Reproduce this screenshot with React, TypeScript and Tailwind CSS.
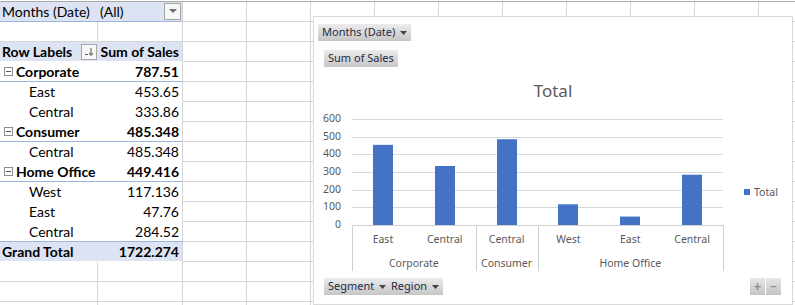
import React from 'react';

const pivotFont = { fontFamily: 'Lato, "Liberation Sans", sans-serif' };
const chartFont = '"Noto Sans", "Open Sans", sans-serif';

type PivotRow = {
  label?: string;
  value?: string;
  kind: 'filter' | 'empty' | 'header' | 'group' | 'item' | 'total';
  blueLine?: boolean;
};

const rows: PivotRow[] = [
  { kind: 'filter', label: 'Months (Date)', value: '(All)', blueLine: true },
  { kind: 'empty' },
  { kind: 'header', label: 'Row Labels', value: 'Sum of Sales' },
  { kind: 'group', label: 'Corporate', value: '787.51', blueLine: true },
  { kind: 'item', label: 'East', value: '453.65' },
  { kind: 'item', label: 'Central', value: '333.86' },
  { kind: 'group', label: 'Consumer', value: '485.348', blueLine: true },
  { kind: 'item', label: 'Central', value: '485.348' },
  { kind: 'group', label: 'Home Office', value: '449.416', blueLine: true },
  { kind: 'item', label: 'West', value: '117.136' },
  { kind: 'item', label: 'East', value: '47.76' },
  { kind: 'item', label: 'Central', value: '284.52', blueLine: true },
  { kind: 'total', label: 'Grand Total', value: '1722.274' },
  { kind: 'empty' },
  { kind: 'empty' },
  { kind: 'empty' },
];

const extraCols = Array.from({ length: 10 });

function MinusBox() {
  return (
    <span className="inline-flex items-center justify-center w-[9px] h-[9px] border border-[#8c8c8c] bg-white mr-[3px] shrink-0">
      <span className="block w-[5px] h-[1px] bg-[#555]" />
    </span>
  );
}

function DropButton() {
  return (
    <span className="flex items-center justify-center w-[17px] h-[17px] border border-[#a6a6a6] bg-[#f7f7f7]">
      <svg width="8" height="5" viewBox="0 0 8 5">
        <path d="M0 0 L8 0 L4 4 Z" fill="#6a6a6a" />
      </svg>
    </span>
  );
}

function SortButton() {
  return (
    <span className="flex items-center justify-center w-[16px] h-[16px] border border-[#a6a6a6] bg-[#f7f7f7]">
      <svg width="10" height="10" viewBox="0 0 10 10">
        <path d="M1 7.5 H4" stroke="#555" strokeWidth="1" />
        <path d="M7 1 V8" stroke="#555" strokeWidth="1" />
        <path d="M5 6 L7 8.5 L9 6" stroke="#555" strokeWidth="1" fill="none" />
      </svg>
    </span>
  );
}

function PivotCell({ row }: { row: PivotRow }) {
  const border = row.blueLine ? 'border-b-[#9bb5dc]' : 'border-b-white';
  if (row.kind === 'empty') {
    return (
      <div className="flex w-[183px] h-[20px] shrink-0 border-b border-r border-[#d4d4d4]">
        <div className="w-[98px] border-r border-[#d4d4d4]" />
        <div className="flex-1" />
      </div>
    );
  }
  if (row.kind === 'filter') {
    return (
      <div className={`flex items-center w-[183px] h-[20px] shrink-0 border-b border-r border-r-[#d4d4d4] ${border} bg-[#dce4f3] text-[14px] text-black`}>
        <div className="w-[98px] pl-[2px]">{row.label}</div>
        <div className="flex-1 pl-[2px]">{row.value}</div>
        <div className="mr-[1px]">
          <DropButton />
        </div>
      </div>
    );
  }
  if (row.kind === 'header') {
    return (
      <div className="flex items-center w-[183px] h-[20px] shrink-0 border-b border-r border-r-[#d4d4d4] border-b-white bg-[#dce4f3] text-[14px] font-bold text-black">
        <div className="w-[98px] flex items-center pl-[2px] pr-[1px]">
          <span className="flex-1">{row.label}</span>
          <SortButton />
        </div>
        <div className="flex-1 text-right pr-[3px]">{row.value}</div>
      </div>
    );
  }
  const bold = row.kind !== 'item';
  const bg = row.kind === 'total' ? 'bg-[#dce4f3]' : 'bg-white';
  return (
    <div className={`flex items-center w-[183px] h-[20px] shrink-0 border-b border-r border-r-[#d4d4d4] ${border} ${bg} text-[14px] text-black ${bold ? 'font-bold' : ''}`}>
      <div className={`flex items-center flex-1 ${row.kind === 'item' ? 'pl-[29px]' : row.kind === 'group' ? 'pl-[4px]' : 'pl-[2px]'}`}>
        {row.kind === 'group' && <MinusBox />}
        <span>{row.label}</span>
      </div>
      <div className="pr-[3px] text-right">{row.value}</div>
    </div>
  );
}

const data = [
  { cat: 'East', v: 453.65 },
  { cat: 'Central', v: 333.86 },
  { cat: 'Central', v: 485.348 },
  { cat: 'West', v: 117.136 },
  { cat: 'East', v: 47.76 },
  { cat: 'Central', v: 284.52 },
];

function ChartSvg() {
  const x0 = 38;
  const x1 = 409;
  const y0 = 208;
  const scale = 106 / 600;
  const step = (x1 - x0) / 6;
  const ticks = [0, 100, 200, 300, 400, 500, 600];
  const groups = [
    { name: 'Corporate', from: 0, to: 2 },
    { name: 'Consumer', from: 2, to: 3 },
    { name: 'Home Office', from: 3, to: 6 },
  ];
  return (
    <svg className="absolute left-0 top-0" width="480" height="289" style={{ fontFamily: chartFont }}>
      {ticks.map((t) => {
        const y = Math.round(y0 - t * scale) + 0.5;
        return (
          <g key={t}>
            {t > 0 && <line x1={x0} x2={x1} y1={y} y2={y} stroke="#d9d9d9" strokeWidth="1" />}
            <text x="27" y={y - 1.5} textAnchor="end" dominantBaseline="central" fontSize="10.5" fill="#595959">
              {t}
            </text>
          </g>
        );
      })}
      <line x1={x0} x2={x1} y1={y0 + 0.5} y2={y0 + 0.5} stroke="#d0d0d0" strokeWidth="1" />
      {[0, 2, 3, 6].map((i) => {
        const x = Math.round(x0 + i * step) + 0.5;
        return <line key={i} x1={x} x2={x} y1={y0} y2={254} stroke="#d0d0d0" strokeWidth="1" />;
      })}
      {data.map((d, i) => {
        const cx = x0 + step * i + step / 2;
        const h = d.v * scale;
        return (
          <g key={i}>
            <rect x={Math.round(cx - 10)} y={y0 - h} width="20" height={h} fill="#4472c4" />
            <text x={cx} y="222" textAnchor="middle" dominantBaseline="central" fontSize="10.5" fill="#595959">
              {d.cat}
            </text>
          </g>
        );
      })}
      {groups.map((g) => (
        <text
          key={g.name}
          x={x0 + step * ((g.from + g.to) / 2)}
          y="245.5"
          textAnchor="middle"
          dominantBaseline="central"
          fontSize="10.5"
          fill="#595959"
        >
          {g.name}
        </text>
      ))}
      <rect x="430" y="172" width="6" height="6" fill="#4472c4" />
      <text x="440" y="174.5" dominantBaseline="central" fontSize="10.5" fill="#595959">
        Total
      </text>
    </svg>
  );
}

function FieldButton({ label, arrow, className }: { label: string; arrow?: boolean; className: string }) {
  return (
    <div
      className={`absolute flex items-center gap-[5px] px-[4px] bg-linear-to-b from-[#ececec] to-[#c6c6c6] text-[11px] text-[#1f2a44] ${className}`}
      style={{ fontFamily: chartFont }}
    >
      <span>{label}</span>
      {arrow && (
        <svg width="7" height="4" viewBox="0 0 7 4">
          <path d="M0 0 L7 0 L3.5 4 Z" fill="#444" />
        </svg>
      )}
    </div>
  );
}

function Chart() {
  return (
    <div className="absolute left-[313px] top-[16px] w-[480px] h-[289px] border border-[#d9d9d9] bg-white">
      <ChartSvg />
      <FieldButton label="Months (Date)" arrow className="left-[4px] top-[7px] h-[17px]" />
      <FieldButton label="Sum of Sales" className="left-[10px] top-[33px] h-[17px]" />
      <div
        className="absolute left-0 right-0 top-[61px] text-center text-[17px] text-[#595959]"
        style={{ fontFamily: chartFont }}
      >
        Total
      </div>
      <FieldButton label="Segment" arrow className="left-[10px] top-[261px] h-[17px]" />
      <FieldButton label="Region" arrow className="left-[73px] top-[261px] h-[17px]" />
      <div className="absolute left-[436px] top-[261px] flex gap-[1px]">
        <div className="flex items-center justify-center w-[15px] h-[17px] bg-linear-to-b from-[#e6e6e6] to-[#c4c4c4] text-[#8a8a8a] text-[13px] font-bold leading-none">
          +
        </div>
        <div className="flex items-center justify-center w-[15px] h-[17px] bg-linear-to-b from-[#e6e6e6] to-[#c4c4c4] text-[#8a8a8a] text-[13px] font-bold leading-none">
          −
        </div>
      </div>
    </div>
  );
}

export default function App() {
  return (
    <div className="relative w-[795px] h-[305px] overflow-hidden bg-white" style={pivotFont}>
      <div className="h-[1px] bg-white" />
      <div className="h-[1px] bg-[#a8a8a8]" />
      {rows.map((row, i) => (
        <div key={i} className="flex">
          <PivotCell row={row} />
          {extraCols.map((_, j) => (
            <div key={j} className="w-[64px] h-[20px] shrink-0 border-b border-r border-[#d4d4d4]" />
          ))}
        </div>
      ))}
      <Chart />
    </div>
  );
}
